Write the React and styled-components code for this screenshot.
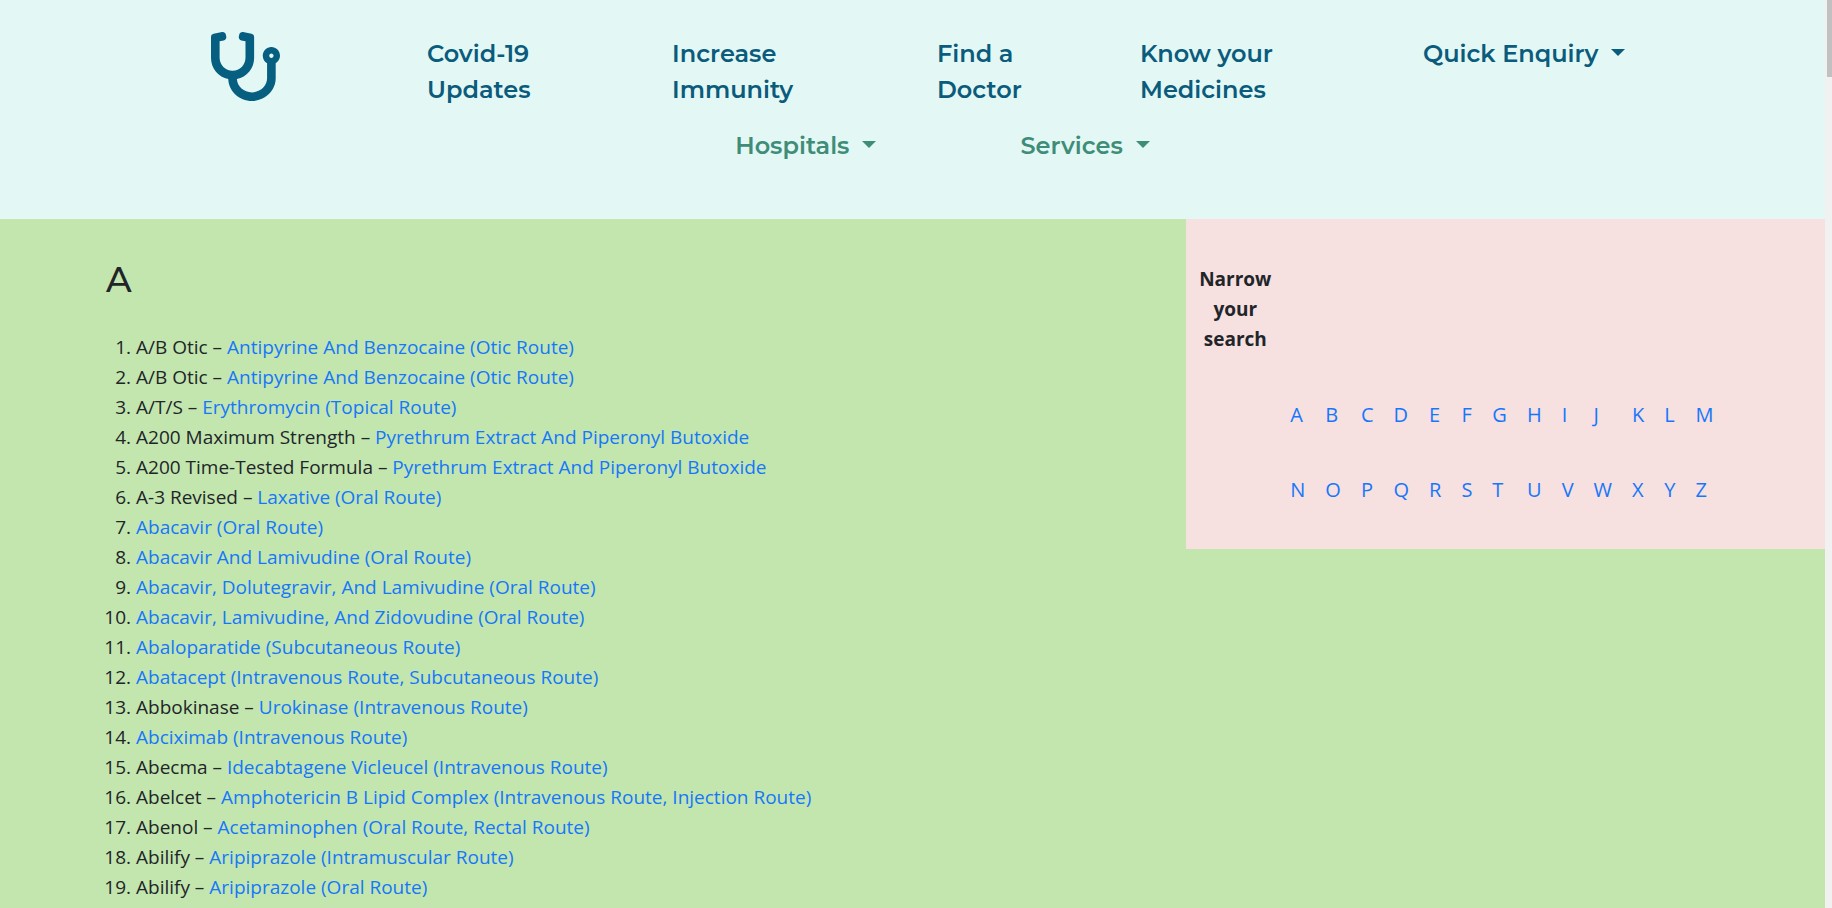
import React from 'react';
import styled, { createGlobalStyle } from 'styled-components';
import { FaStethoscope } from 'react-icons/fa';

const GlobalStyle = createGlobalStyle`
  *, *::before, *::after { box-sizing: border-box; }
  body {
    margin: 0;
    background: #c3e6ae;
    color: #212529;
    font: 19px/30px 'Segoe UI', 'Open Sans', 'Noto Sans', sans-serif;
  }
  a { color: #1677fb; text-decoration: none; }
`;

const Shell = styled.div`
  display: flex;
  min-height: 100vh;
`;

const Page = styled.div`
  flex: 1;
  min-width: 0;
`;

const ScrollTrack = styled.div`
  width: 7px;
  padding-left: 2px;
  background: #f1f1f1;
`;

const ScrollThumb = styled.div`
  height: 77px;
  background: #c1c1c1;
`;

const Header = styled.header`
  padding: 32px 0 55px;
  background: #e3f8f5;
  font-family: Montserrat, Inter, sans-serif;
  font-size: 24px;
  font-weight: 600;
  line-height: 36px;
`;

const PrimaryNav = styled.nav`
  display: grid;
  grid-template-columns: 216fr 245fr 265fr 203fr 283fr 402fr;
  align-items: start;
  padding-left: 211px;
`;

const SecondaryNav = styled.nav`
  display: flex;
  justify-content: center;
  gap: 144px;
  margin-top: 20px;
  padding-left: 60px;
`;

const Brand = styled.a`
  display: flex;
  && { color: #065f80; }
`;

const NavLink = styled.a`
  padding-top: 4px;
  && { color: #0b5b7c; }
`;

const MenuButton = styled.button`
  display: flex;
  align-items: center;
  gap: 13px;
  justify-self: start;
  padding: ${({ $primary }) => ($primary ? '4px 0 0' : '0')};
  border: 0;
  background: none;
  color: ${({ $primary }) => ($primary ? '#0b5b7c' : '#3f8d78')};
  font: inherit;
  cursor: pointer;

  &::after {
    content: '';
    border: 7px solid transparent;
    border-top-color: currentColor;
    border-bottom: 0;
    margin-bottom: 3px;
  }
`;

const Content = styled.div`
  display: flex;
  align-items: flex-start;
`;

const Medicines = styled.main`
  width: 65%;
  padding: 40px 0 0 106px;
`;

const Letter = styled.h1`
  margin: 0 0 31px;
  font: 500 35px/42px Montserrat, Inter, sans-serif;
`;

const MedicineList = styled.ol`
  margin: 0;
  padding-left: 30px;
`;

const Panel = styled.aside`
  width: 35%;
  padding: 23px 4px 22px;
  background: #f6e0e0;
`;

const LetterTable = styled.table`
  border-collapse: collapse;
`;

const Title = styled.th`
  width: 90px;
  padding: 22px 8px 23px;
  text-align: center;
  font-weight: 700;
`;

const Cell = styled.td`
  padding: 23px 10px 22px;
  font-size: 20px;
  text-align: left;
`;

const medicines = [
  ['A/B Otic', 'Antipyrine And Benzocaine (Otic Route)'],
  ['A/B Otic', 'Antipyrine And Benzocaine (Otic Route)'],
  ['A/T/S', 'Erythromycin (Topical Route)'],
  ['A200 Maximum Strength', 'Pyrethrum Extract And Piperonyl Butoxide'],
  ['A200 Time-Tested Formula', 'Pyrethrum Extract And Piperonyl Butoxide'],
  ['A-3 Revised', 'Laxative (Oral Route)'],
  ['', 'Abacavir (Oral Route)'],
  ['', 'Abacavir And Lamivudine (Oral Route)'],
  ['', 'Abacavir, Dolutegravir, And Lamivudine (Oral Route)'],
  ['', 'Abacavir, Lamivudine, And Zidovudine (Oral Route)'],
  ['', 'Abaloparatide (Subcutaneous Route)'],
  ['', 'Abatacept (Intravenous Route, Subcutaneous Route)'],
  ['Abbokinase', 'Urokinase (Intravenous Route)'],
  ['', 'Abciximab (Intravenous Route)'],
  ['Abecma', 'Idecabtagene Vicleucel (Intravenous Route)'],
  ['Abelcet', 'Amphotericin B Lipid Complex (Intravenous Route, Injection Route)'],
  ['Abenol', 'Acetaminophen (Oral Route, Rectal Route)'],
  ['Abilify', 'Aripiprazole (Intramuscular Route)'],
  ['Abilify', 'Aripiprazole (Oral Route)'],
];

const letterRows = ['ABCDEFGHIJKLM', 'NOPQRSTUVWXYZ'];

export default function App() {
  return (
    <Shell>
      <GlobalStyle />
      <Page>
        <Header>
          <PrimaryNav aria-label="Main">
            <Brand href="#" aria-label="Home"><FaStethoscope size={69} /></Brand>
            <NavLink href="#">Covid-19<br />Updates</NavLink>
            <NavLink href="#">Increase<br />Immunity</NavLink>
            <NavLink href="#">Find a<br />Doctor</NavLink>
            <NavLink href="#">Know your<br />Medicines</NavLink>
            <MenuButton type="button" $primary>Quick Enquiry</MenuButton>
          </PrimaryNav>
          <SecondaryNav aria-label="More">
            <MenuButton type="button">Hospitals</MenuButton>
            <MenuButton type="button">Services</MenuButton>
          </SecondaryNav>
        </Header>
        <Content>
          <Medicines>
            <Letter>A</Letter>
            <MedicineList>
              {medicines.map(([brand, name], i) => (
                <li key={i}>
                  {brand && `${brand} – `}
                  <a href="#">{name}</a>
                </li>
              ))}
            </MedicineList>
          </Medicines>
          <Panel>
            <LetterTable>
              <thead>
                <tr>
                  <Title scope="col">Narrow your search</Title>
                </tr>
              </thead>
              <tbody>
                {letterRows.map((row) => (
                  <tr key={row}>
                    <Cell />
                    {[...row].map((letter) => (
                      <Cell key={letter}><a href="#">{letter}</a></Cell>
                    ))}
                  </tr>
                ))}
              </tbody>
            </LetterTable>
          </Panel>
        </Content>
      </Page>
      <ScrollTrack aria-hidden="true"><ScrollThumb /></ScrollTrack>
    </Shell>
  );
}
